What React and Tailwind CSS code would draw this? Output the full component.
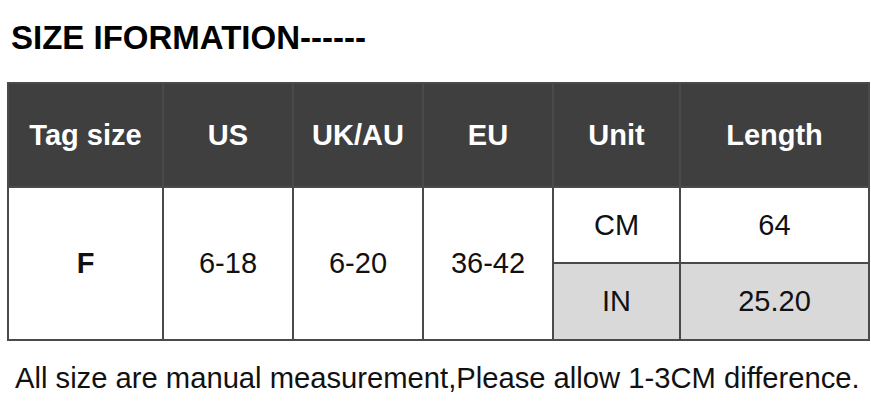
import React from 'react';

const headers = ['Tag size', 'US', 'UK/AU', 'EU', 'Unit', 'Length'];

const App = () => {
  const cell = 'border-2 border-[#4a4a4a] text-center align-middle';

  return (
    <div className="h-[408px] w-[871px] bg-white font-['Liberation_Sans',Arial,sans-serif] text-[#111]">
      <h1 className="pl-[11px] pt-[21px] text-[33px] font-bold leading-none text-black">SIZE IFORMATION------</h1>

      <div className="mt-[28px] pl-[7px]">
        <table className="w-[861px] table-fixed border-collapse border-2 border-[#3a3a3a]">
          <colgroup>
            <col className="w-[155px]" />
            <col className="w-[130px]" />
            <col className="w-[130px]" />
            <col className="w-[130px]" />
            <col className="w-[127px]" />
            <col className="w-[189px]" />
          </colgroup>
          <thead>
            <tr className="h-[104px] bg-[#3f3f3f]">
              {headers.map((h) => (
                <th key={h} className={`${cell} border-[#2a2a2a] text-[29px] font-bold leading-none text-white`}>
                  {h}
                </th>
              ))}
            </tr>
          </thead>
          <tbody className="text-[29px] leading-none">
            <tr className="h-[76px]">
              <td rowSpan={2} className={`${cell} font-bold`}>F</td>
              <td rowSpan={2} className={cell}>6-18</td>
              <td rowSpan={2} className={cell}>6-20</td>
              <td rowSpan={2} className={cell}>36-42</td>
              <td className={cell}>CM</td>
              <td className={cell}>64</td>
            </tr>
            <tr className="h-[77px] bg-[#d9d9d9]">
              <td className={cell}>IN</td>
              <td className={cell}>25.20</td>
            </tr>
          </tbody>
        </table>
      </div>

      <p className="mt-[23px] pl-[15px] text-[29.2px] leading-none text-[#111]">
        All size are manual measurement,Please allow 1-3CM difference.
      </p>
    </div>
  );
};

export default App;
